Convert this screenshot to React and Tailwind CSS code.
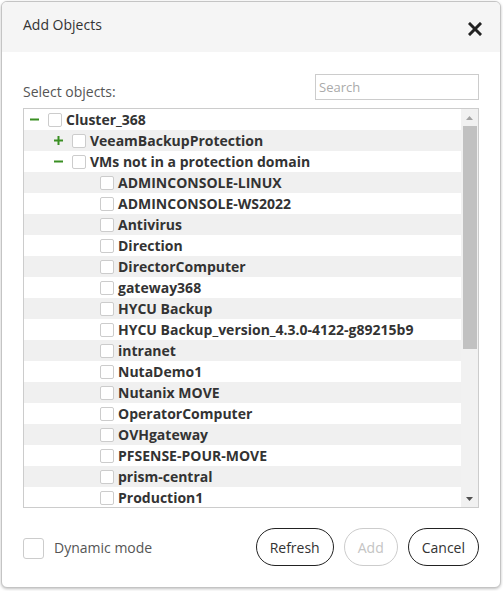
import React from 'react'

const font = { fontFamily: '"Open Sans", "Noto Sans", sans-serif' }

const rows = [
    { label: 'Cluster_368', level: 1, toggle: 'minus' },
    { label: 'VeeamBackupProtection', level: 2, toggle: 'plus' },
    { label: 'VMs not in a protection domain', level: 2, toggle: 'minus' },
    { label: 'ADMINCONSOLE-LINUX', level: 3 },
    { label: 'ADMINCONSOLE-WS2022', level: 3 },
    { label: 'Antivirus', level: 3 },
    { label: 'Direction', level: 3 },
    { label: 'DirectorComputer', level: 3 },
    { label: 'gateway368', level: 3 },
    { label: 'HYCU Backup', level: 3 },
    { label: 'HYCU Backup_version_4.3.0-4122-g89215b9', level: 3 },
    { label: 'intranet', level: 3 },
    { label: 'NutaDemo1', level: 3 },
    { label: 'Nutanix MOVE', level: 3 },
    { label: 'OperatorComputer', level: 3 },
    { label: 'OVHgateway', level: 3 },
    { label: 'PFSENSE-POUR-MOVE', level: 3 },
    { label: 'prism-central', level: 3 },
    { label: 'Production1', level: 3 },
]

function Toggle({ type }) {
    return (
        <svg width="9" height="9" viewBox="0 0 9 9" className="mr-[9px] shrink-0">
            <rect x="0" y="3.5" width="9" height="2" fill="#3a8f23" />
            {type === 'plus' && <rect x="3.5" y="0" width="2" height="9" fill="#3a8f23" />}
        </svg>
    )
}

function Row({ row, index }) {
    const pad = row.level === 1 ? 'pl-[6px]' : row.level === 2 ? 'pl-[30px]' : 'pl-[76px]'
    return (
        <div className={`h-[21px] flex items-center whitespace-nowrap ${pad} ${index % 2 === 1 ? 'bg-[#f0f0f0]' : 'bg-white'}`}>
            {row.toggle && <Toggle type={row.toggle} />}
            <span className="w-[14px] h-[14px] shrink-0 border border-[#cccccc] rounded-[2px] bg-white mr-[4px]" />
            <span className="text-[14px] font-bold text-[#333333] leading-[19px]">{row.label}</span>
        </div>
    )
}

export default function App() {
    return (
        <div className="w-[503px] h-[591px] bg-white pt-px pl-px overflow-hidden" style={font}>
            <div className="w-[500px] h-[587px] border border-[#c4c4c4] rounded-[6px] shadow-[0_1px_3px_rgba(0,0,0,0.25)] overflow-hidden flex flex-col bg-white">
                <div className="h-[50px] bg-[#f5f5f5] flex justify-between pl-[21px] pr-[18px]">
                    <div className="pt-[13px] text-[14px] leading-[19px] text-[#333333]">Add Objects</div>
                    <svg width="14" height="14" viewBox="0 0 14 14" className="mt-[20px]">
                        <path d="M2 2 L12 12 M12 2 L2 12" stroke="#222222" strokeWidth="3" strokeLinecap="square" />
                    </svg>
                </div>

                <div className="px-[21px] flex flex-col">
                    <div className="mt-[22px] h-[26px] flex justify-between items-start">
                        <div className="pt-[10px] text-[14px] leading-[16px] text-[#555555]">Select objects:</div>
                        <input
                            placeholder="Search"
                            className="w-[164px] h-[26px] border border-[#cccccc] px-[3px] text-[13px] text-[#333333] placeholder:text-[#aaaaaa] outline-none"
                            style={font}
                        />
                    </div>

                    <div className="mt-[8px] h-[400px] border border-[#cccccc] flex overflow-hidden">
                        <div className="flex-1 overflow-hidden">
                            {rows.map((row, i) => <Row key={row.label} row={row} index={i} />)}
                        </div>
                        <div className="w-[17px] bg-[#f1f1f1] flex flex-col">
                            <div className="h-[17px] flex items-center justify-center">
                                <svg width="7" height="4" viewBox="0 0 7 4"><path d="M0 4 L3.5 0 L7 4 Z" fill="#a3a3a3" /></svg>
                            </div>
                            <div className="h-[223px] ml-[2px] mr-[1px] bg-[#c1c1c1]" />
                            <div className="flex-1" />
                            <div className="h-[17px] flex items-center justify-center">
                                <svg width="7" height="4" viewBox="0 0 7 4"><path d="M0 0 L7 0 L3.5 4 Z" fill="#505050" /></svg>
                            </div>
                        </div>
                    </div>

                    <div className="mt-[20px] flex items-center justify-between">
                        <div className="flex items-center">
                            <span className="w-[21px] h-[21px] border border-[#cccccc] rounded-[3px] bg-white mt-[2px]" />
                            <span className="ml-[10px] text-[14px] leading-[19px] text-[#555555]">Dynamic mode</span>
                        </div>
                        <div className="flex items-center gap-[10px]">
                            <button className="h-[38px] px-[13px] rounded-full border border-[#222222] text-[14px] text-[#333333] bg-white" style={font}>Refresh</button>
                            <button className="h-[38px] px-[13px] rounded-full border border-[#cccccc] text-[14px] text-[#c4c4c4] bg-white" style={font}>Add</button>
                            <button className="h-[38px] px-[13px] rounded-full border border-[#222222] text-[14px] text-[#333333] bg-white" style={font}>Cancel</button>
                        </div>
                    </div>
                </div>
            </div>
        </div>
    )
}
